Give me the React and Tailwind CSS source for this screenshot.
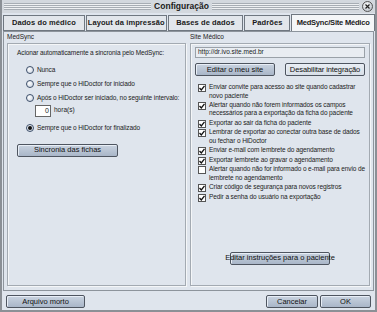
import React from "react";

const FONT = { fontFamily: '"Liberation Sans", Arial, sans-serif' };

function Btn({ children, className = "" }) {
  return (
    <div
      className={`flex items-center justify-center whitespace-nowrap h-[13px] rounded-[2px] border border-[#4e5560] bg-[linear-gradient(#c9d3e0,#a9b6c8)] text-[7.5px] leading-none text-[#111] shadow-[inset_1px_1px_0_#e8eef6] ${className}`}
    >
      {children}
    </div>
  );
}

function Radio({ checked, children }) {
  return (
    <div className="flex items-center gap-[3px] h-[13px]">
      <div className="w-[8px] h-[8px] shrink-0 rounded-full border border-[#3d4f6a] bg-[radial-gradient(circle_at_35%_35%,#ffffff,#c6d0de)] flex items-center justify-center">
        {checked && <div className="w-[4px] h-[4px] rounded-full bg-[#111]" />}
      </div>
      <span className="text-[6.5px] leading-none whitespace-nowrap tracking-[-0.1px]">{children}</span>
    </div>
  );
}

function Check({ checked, lines }) {
  return (
    <div className="flex items-start gap-[3px]">
      <div className="mt-[1px] w-[8px] h-[8px] shrink-0 border border-[#555] bg-white flex items-center justify-center">
        {checked && (
          <svg width="6" height="6" viewBox="0 0 6 6">
            <path d="M0.5 3 L2.3 5 L5.5 0.8" stroke="#111" strokeWidth="1.3" fill="none" />
          </svg>
        )}
      </div>
      <div className="text-[6.5px] leading-[8.6px] text-[#222] whitespace-nowrap tracking-[-0.1px]">
        {lines.map((l, i) => (
          <div key={i}>{l}</div>
        ))}
      </div>
    </div>
  );
}

function Tab({ label, active, w }) {
  return (
    <div
      className={`flex items-center justify-center whitespace-nowrap border border-[#6f7780] text-[7.5px] font-bold leading-none ${
        active ? "bg-[#f4f6f8] border-b-0 h-[17px] tracking-[-0.2px]" : "bg-[#e2e6eb] h-[16px] tracking-[0.1px]"
      }`}
      style={{ width: w }}
    >
      {label}
    </div>
  );
}

export default function App() {
  const checks = [
    [true, ["Enviar convite para acesso ao site quando cadastrar", "novo paciente"]],
    [true, ["Alertar quando não forem informados os campos", "necessários para a exportação da ficha do paciente"]],
    [true, ["Exportar ao sair da ficha do paciente"]],
    [true, ["Lembrar de exportar ao conectar outra base de dados", "ou fechar o HiDoctor"]],
    [true, ["Enviar e-mail com lembrete do agendamento"]],
    [true, ["Exportar lembrete ao gravar o agendamento"]],
    [false, ["Alertar quando não for informado o e-mail para envio de", "lembrete no agendamento"]],
    [true, ["Criar código de segurança para novos registros"]],
    [true, ["Pedir a senha do usuário na exportação"]],
  ];

  return (
    <div
      className="w-[377px] h-[312px] bg-[#dfe5ed] border-x-2 border-b-2 border-[#8b9096] flex flex-col text-[#1a1a1a] overflow-hidden"
      style={FONT}
    >
      {/* title bar */}
      <div className="h-[13px] flex items-center bg-[#d3d8de] px-[2px] gap-[3px]">
        <div className="flex-1 h-[7px] bg-[repeating-linear-gradient(#a7adb4_0px,#a7adb4_1px,#eef0f2_1px,#eef0f2_2px)]" />
        <span className="text-[8.5px] font-bold leading-none">Configuração</span>
        <div className="flex-1 h-[7px] bg-[repeating-linear-gradient(#a7adb4_0px,#a7adb4_1px,#eef0f2_1px,#eef0f2_2px)]" />
        <div className="w-[11px] h-[11px] rounded-full border border-[#555] bg-[radial-gradient(circle_at_40%_35%,#ffffff,#aab2bc)] flex items-center justify-center">
          <svg width="5" height="5" viewBox="0 0 5 5">
            <path d="M0.5 0.5 L4.5 4.5 M4.5 0.5 L0.5 4.5" stroke="#222" strokeWidth="1.2" />
          </svg>
        </div>
      </div>

      {/* tabs */}
      <div className="flex pl-[1px] mt-[1px] gap-[1px] items-end">
        <Tab label="Dados do médico" w={82} />
        <Tab label="Layout da impressão" w={81} />
        <Tab label="Bases de dados" w={76} />
        <Tab label="Padrões" w={46} />
        <Tab label="MedSync/Site Médico" w={84} active />
      </div>

      {/* content */}
      <div className="mx-[1px] h-[260px] border border-[#8d949c] bg-[#dfe5ed] flex gap-[4px] px-[3px] pt-[2px] pb-[4px]">
        <div className="w-[179px] flex flex-col">
          <div className="text-[6.5px] leading-none h-[8px]">MedSync</div>
          <div className="flex-1 mt-[1px] border border-[#a3aab2] shadow-[inset_1px_1px_0_#f4f6f8,1px_1px_0_#f4f6f8] px-[9px] pt-[6px]">
            <div className="text-[6.5px] leading-none whitespace-nowrap tracking-[-0.1px]">Acionar automaticamente a sincronia pelo MedSync:</div>
            <div className="mt-[7px] pl-[9px] flex flex-col gap-[1px]">
              <Radio>Nunca</Radio>
              <Radio>Sempre que o HiDoctor for iniciado</Radio>
              <Radio>Após o HiDoctor ser iniciado, no seguinte intervalo:</Radio>
              <div className="flex items-center gap-[3px] pl-[9px] -mt-[1px]">
                <div className="w-[16px] h-[12px] bg-white border border-[#666] text-[7px] leading-none flex items-center justify-end pr-[1px]">0</div>
                <span className="text-[6.5px] leading-none">hora(s)</span>
              </div>
              <div className="mt-[4px]">
                <Radio checked>Sempre que o HiDoctor for finalizado</Radio>
              </div>
            </div>
            <Btn className="w-[101px] mt-[9px]">Sincronia das fichas</Btn>
          </div>
        </div>

        <div className="flex-1 flex flex-col">
          <div className="text-[6.5px] leading-none h-[8px]">Site Médico</div>
          <div className="flex-1 mt-[1px] border border-[#a3aab2] shadow-[inset_1px_1px_0_#f4f6f8,1px_1px_0_#f4f6f8] px-[4px] pt-[3px]">
            <div className="h-[11px] border border-[#9aa1a8] bg-[#e9edf2] text-[6.5px] leading-none flex items-center pl-[2px]">
              http://dr.ivo.site.med.br
            </div>
            <div className="flex justify-between mt-[5px]">
              <Btn className="w-[80px]">Editar o meu site</Btn>
              <Btn className="w-[80px] bg-[linear-gradient(#e8edf3,#d8dfe8)] tracking-[-0.1px]">Desabilitar integração</Btn>
            </div>
            <div className="mt-[7px] pl-[3px] flex flex-col gap-[0.6px]">
              {checks.map(([c, l], i) => (
                <Check key={i} checked={c} lines={l} />
              ))}
            </div>
            <div className="flex justify-center mt-[50px]">
              <Btn className="w-[100px] text-[6.5px]">Editar instruções para o paciente</Btn>
            </div>
          </div>
        </div>
      </div>

      {/* footer */}
      <div className="flex items-center justify-between px-[4px] mt-[4px]">
        <Btn className="w-[79px]">Arquivo morto</Btn>
        <div className="flex gap-[2px]">
          <Btn className="w-[52px]">Cancelar</Btn>
          <Btn className="w-[51px]">OK</Btn>
        </div>
      </div>
    </div>
  );
}
